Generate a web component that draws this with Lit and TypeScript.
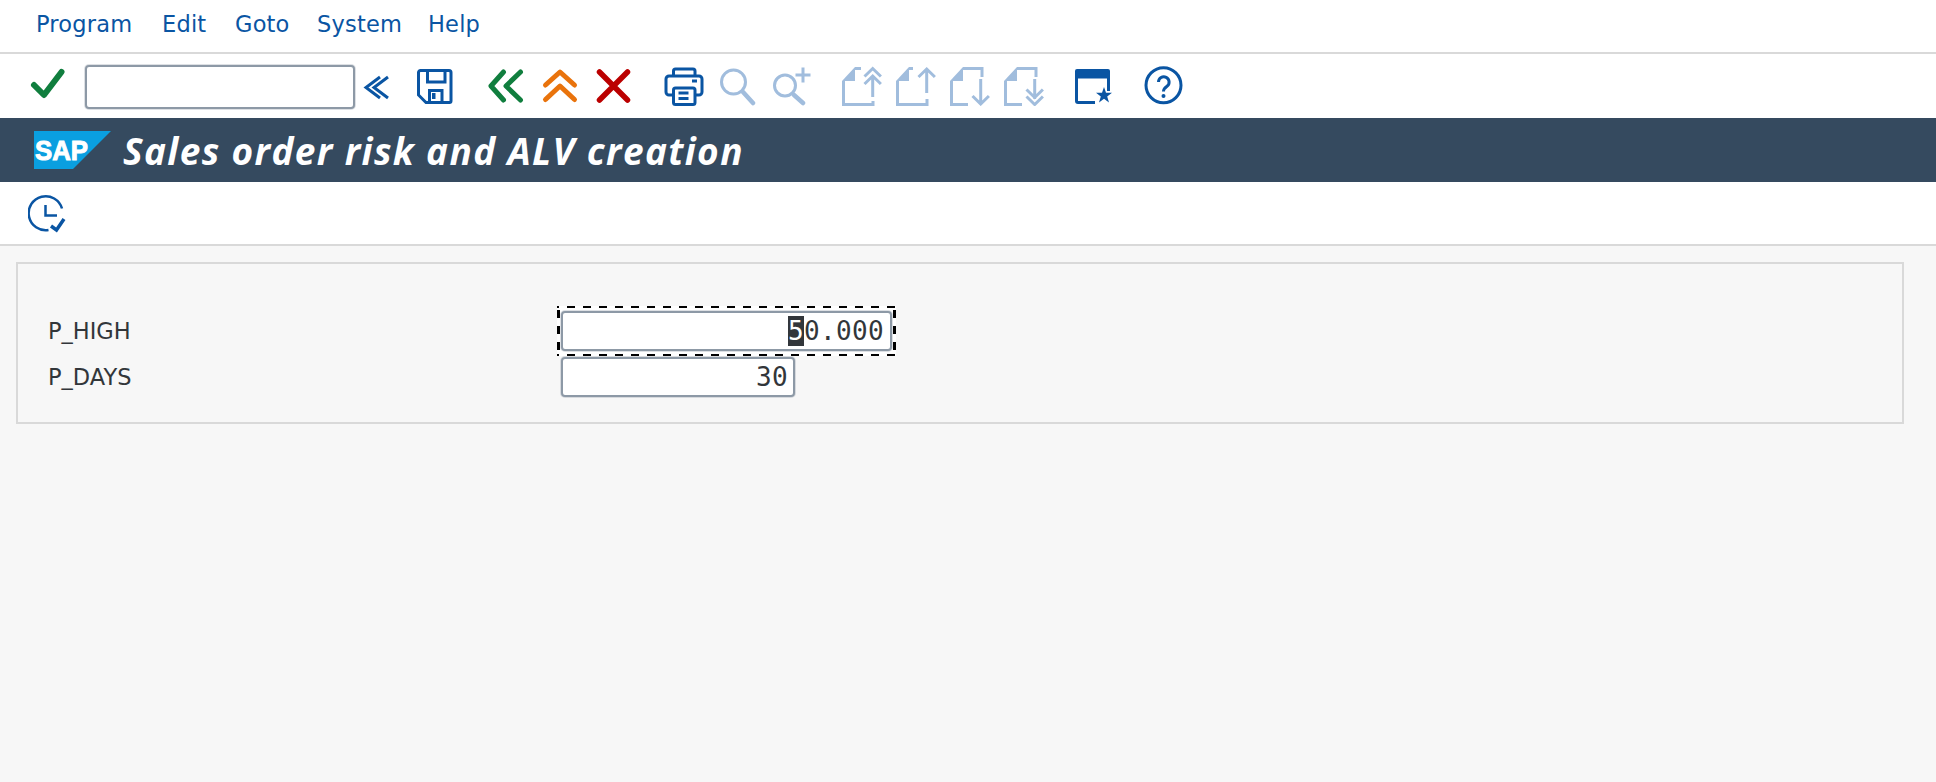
import { LitElement, html, svg, css } from "lit";
import { customElement } from "lit/decorators.js";

const MENU = ["Program", "Edit", "Goto", "System", "Help"];

const pageBody = svg`<polygon class="fill" points="0,15 13,1 13,15" />`;

// toolbar icons, all drawn on a 40x40 box
const ICONS = [
  svg`<polyline class="ok check" points="6,19 16,29 33.5,6" />`,
  null,
  svg`<path class="blue" d="M22 11 8 21.5 22 32M30 11 16 21.5 30 32" />`,
  svg`<g class="blue">
    <path d="M5.5 4.5H34a2 2 0 0 1 2 2V35a1.500 1.500 0 0 1-1.500 1.500H11L3.500 29V6.500a2 2 0 0 1 2-2z" />
    <path d="M12.500 4.500V16H30V4.500M14.500 36V24.500H27V36" />
    <rect class="solid" x="17" y="27" width="3.500" height="6" />
  </g>`,
  svg`<path class="ok" d="M18.500 6 6 20l12.500 14M35.500 6 21 20l14.500 14" />`,
  svg`<path class="warn" d="M5.500 19 20 6l14.500 13M5.500 33.500 20 20l14.500 13.500" />`,
  svg`<path class="cancel" d="M5.500 6l28 28M33.500 6l-28 28" />`,
  svg`<g class="blue">
    <path d="M9.500 29H5a3 3 0 0 1-3-3V13a3 3 0 0 1 3-3h30a3 3 0 0 1 3 3v13a3 3 0 0 1-3 3h-4" />
    <path d="M9.500 10V5a2 2 0 0 1 2-2H29a2 2 0 0 1 2 2v5" />
    <rect x="9.500" y="22" width="21.500" height="16.500" rx="2" />
    <path d="M14.500 27h10M14.500 32.500h10M28 15h5" />
  </g>`,
  svg`<g class="faint"><circle cx="16.500" cy="16" r="12" /><path class="thick" d="M26 26l10 11" /></g>`,
  svg`<g class="faint">
    <circle cx="14" cy="19.500" r="10.500" /><path class="thick" d="M23 29l9 8" />
    <path d="M32 1.500v15M24.500 9h15" />
  </g>`,
  svg`<g class="faint">${pageBody}
    <path d="M13 2.500h6M1.500 15v23.500H31V35" />
    <path d="M30.700 12v19M22.500 18l8.200-8 8.200 8M22.500 10.500l8.200-8 8.200 8" />
  </g>`,
  svg`<g class="faint">${pageBody}
    <path d="M13 2.500h4M1.500 15v23.500H31V33" />
    <path d="M30.700 3v24M22.500 11l8.200-8 8.200 8" />
  </g>`,
  svg`<g class="faint">${pageBody}
    <path d="M13 2.500h19V11M1.500 15v23.500H18" />
    <path d="M30.700 13v25M22.500 30l8.200 8 8.200-8" />
  </g>`,
  svg`<g class="faint">${pageBody}
    <path d="M13 2.500h19V11M1.500 15v23.500H18" />
    <path d="M30.700 13v20M22.500 23.500l8.200 8 8.200-8M22.500 30.500l8.200 8 8.200-8" />
  </g>`,
  svg`<g class="blue">
    <path class="solid" d="M3 3h31a2 2 0 0 1 2 2v7.500H1V5a2 2 0 0 1 2-2z" />
    <path d="M2.500 12v23a1.500 1.500 0 0 0 1.500 1.500h17M34.500 12v13" />
    <polygon class="solid" points="30,21 32,26.700 38,26.700 33.200,30.400 35,36.500 30,32.800 25,36.500 26.800,30.400 22,26.700 28,26.700" />
  </g>`,
  svg`<g class="blue">
    <circle cx="19.500" cy="19.200" r="17.500" />
    <path d="M14.500 16a5.300 5.300 0 1 1 8.500 4.300c-2.200 1.600-3.500 2.600-3.500 5.200" />
    <circle class="solid" cx="19.500" cy="30" r="2" />
  </g>`,
];

@customElement("app-root")
export class AppRoot extends LitElement {
  static styles = css`
    :host {
      display: block;
      min-height: 782px;
      background: #f7f7f7;
      color: #32363a;
      font-family: "DejaVu Sans", "Noto Sans", sans-serif;
    }

    svg {
      display: block;
      width: 40px;
      height: 40px;
      fill: none;
    }

    .menu {
      display: grid;
      grid-template-columns: 126px 73px 82px 111px max-content;
      height: 43px;
      padding: 9px 0 0 36px;
      background: #fff;
      border-bottom: 2px solid #d9d9d9;
      color: #0a55a3;
      font-size: 22.5px;
      letter-spacing: 0.2px;
      line-height: 30px;
    }

    .toolbar {
      display: grid;
      grid-template-columns: 57px 273px 57px 70px 55px 54px 70px 53px 54px 71px 54px 54px 54px 70px 70px 40px;
      height: 52px;
      padding: 12px 0 0 28px;
      background: #fff;
    }

    .command {
      box-sizing: border-box;
      width: 270px;
      height: 44px;
      margin-top: -1px;
      background: #fff;
      border: 2px solid #8d99a6;
      border-radius: 4px;
      box-shadow: 0 0 0 1px rgba(141, 153, 166, 0.3);
    }

    .blue,
    .blue * {
      stroke: #0a55a3;
      stroke-width: 3;
    }

    .blue rect {
      fill: #fff;
    }

    .blue .solid {
      fill: #0a55a3;
      stroke: none;
    }

    .app-bar .blue * {
      stroke-width: 2.5;
    }

    .app-bar .blue .tick {
      stroke-width: 3.5;
    }

    .ok,
    .warn,
    .cancel {
      stroke-width: 5;
      stroke-linecap: round;
      stroke-linejoin: round;
    }

    .ok {
      stroke: #107e3e;
    }

    .check {
      stroke-width: 6;
    }

    .warn {
      stroke: #e9730c;
    }

    .cancel {
      stroke: #bb0000;
      stroke-width: 5.5;
    }

    .faint {
      stroke: #a1bddd;
      stroke-width: 3;
    }

    .faint .fill {
      fill: #a1bddd;
      stroke: none;
    }

    .faint .thick {
      stroke-width: 4.5;
      stroke-linecap: round;
    }

    .title {
      display: flex;
      height: 64px;
      align-items: center;
      padding-left: 34px;
      gap: 12px;
      background: #354a5f;
      color: #fff;
      font-family: "Open Sans", sans-serif;
      font-size: 37px;
      font-weight: 700;
      font-style: italic;
      letter-spacing: 1.36px;
    }

    .logo {
      width: 77px;
      height: 38px;
    }

    .logo polygon {
      fill: #0a9fe0;
    }

    .logo text {
      fill: #fff;
      stroke: #fff;
      stroke-width: 1;
      font-family: "Liberation Sans", sans-serif;
      font-size: 28px;
      font-weight: 700;
      font-style: normal;
      letter-spacing: 0;
    }

    .app-bar {
      height: 51px;
      padding: 11px 0 0 28px;
      background: #fff;
      border-bottom: 2px solid #d9d9d9;
    }

    .group {
      display: grid;
      grid-template-columns: 513px max-content;
      row-gap: 6px;
      align-items: center;
      margin: 16px 32px 0 16px;
      padding: 47px 0 25px 30px;
      border: 2px solid #d9d9d9;
      font-size: 22.5px;
    }

    .field {
      position: relative;
      box-sizing: border-box;
      height: 40px;
      padding-right: 5px;
      background: #fff;
      border: 2px solid #8d99a6;
      border-radius: 4px;
      box-shadow: 0 0 0 1px rgba(141, 153, 166, 0.3);
      font-family: "DejaVu Sans Mono", monospace;
      font-size: 26px;
      letter-spacing: 0.35px;
      line-height: 36px;
      text-align: right;
    }

    .high {
      width: 331px;
      padding-right: 6px;
    }

    .days {
      width: 234px;
    }

    /* dashed focus frame round the active field */
    .high::before {
      content: "";
      position: absolute;
      z-index: -1;
      inset: -7px -6px -7px -6px;
      background-color: #fff;
      background-image:
        repeating-linear-gradient(90deg, #000 0 2px, transparent 2px 10px, #000 10px 16px),
        repeating-linear-gradient(90deg, #000 0 2px, transparent 2px 10px, #000 10px 16px),
        repeating-linear-gradient(180deg, transparent 0 4px, #000 4px 12px, transparent 12px 16px),
        repeating-linear-gradient(180deg, transparent 0 4px, #000 4px 12px, transparent 12px 16px);
      background-size: 100% 2px, 100% 2px, 3px 100%, 3px 100%;
      background-position: top, bottom, left, right;
      background-repeat: no-repeat;
    }

    .content {
      position: relative;
      z-index: 0;
    }

    .cursor {
      background: #32363a;
      color: #fff;
    }
  `;

  render() {
    return html`
      <div class="menu">${MENU.map((item) => html`<span>${item}</span>`)}</div>

      <div class="toolbar">
        ${ICONS.map((icon) =>
          icon ? html`<svg viewBox="0 0 40 40">${icon}</svg>` : html`<div class="command"></div>`
        )}
      </div>

      <div class="title">
        <svg class="logo" viewBox="0 0 77 38">
          <polygon points="0,0 77,0 39,38 0,38" />
          <text x="1" y="29" textLength="53" lengthAdjust="spacingAndGlyphs">SAP</text>
        </svg>
        <span>Sales order risk and ALV creation</span>
      </div>

      <div class="app-bar">
        <svg viewBox="0 0 40 40">
          <g class="blue">
            <path d="M34 15.500A17 17 0 1 0 20.500 37M17.500 12v10.500H29" />
            <path class="tick" d="M23 33l5.500 4 7.500-11" />
          </g>
        </svg>
      </div>

      <div class="content">
        <div class="group">
          <span>P_HIGH</span>
          <div class="field high"><span class="cursor">5</span>0.000</div>
          <span>P_DAYS</span>
          <div class="field days">30</div>
        </div>
      </div>
    `;
  }
}
